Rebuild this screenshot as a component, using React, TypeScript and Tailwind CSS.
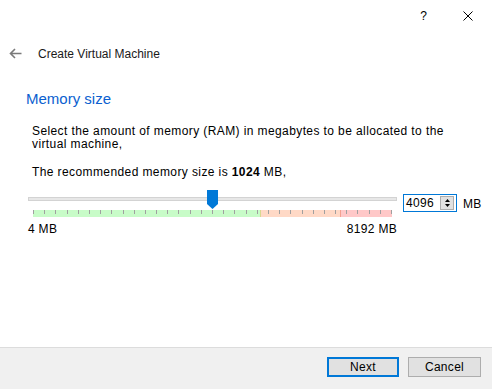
import React from 'react';

const TICKS = Array.from({ length: 33 }, (_, i) => i);

const MemorySlider: React.FC<{ value: number; max: number }> = ({ value, max }) => {
  const pct = (value / max) * 100;
  return (
    <div className="relative w-[369px]">
      {/* track */}
      <div className="h-[19px] relative">
        <div className="absolute left-0 right-0 top-[7px] h-[4px] bg-[#e7e7e7] border border-[#d3d3d3]" />
        <div className="absolute top-0 left-[5px] right-[5px]">
          <svg
            width="11"
            height="19"
            viewBox="0 0 11 19"
            className="absolute top-0 -ml-[5.5px]"
            style={{ left: `${pct}%` }}
          >
            <polygon points="0,0 11,0 11,14 5.5,19 0,14" fill="#0078d7" />
          </svg>
        </div>
      </div>
      {/* colored band with ticks */}
      <div className="ml-[5px] mr-[5px] mt-[1px] h-[7px] flex relative">
        <div className="w-[227px] bg-[#c8fcc8]" />
        <div className="w-px bg-[#d8d890]" />
        <div className="w-[79px] bg-[#ffd9c6]" />
        <div className="w-px bg-[#f4a090]" />
        <div className="flex-1 bg-[#ffc8c8]" />
        <div className="absolute inset-0 flex justify-between">
          {TICKS.map(i => (
            <div key={i} className="w-px h-[4px] bg-[#a0a0a0]" />
          ))}
        </div>
      </div>
      <div className="flex justify-between mt-[5px] text-[12px] leading-[14px] tracking-[0.3px] text-black">
        <span>4 MB</span>
        <span>8192 MB</span>
      </div>
    </div>
  );
};

const App: React.FC = () => {
  return (
    <div
      className="w-[492px] h-[389px] bg-white flex flex-col text-black"
      style={{ fontFamily: '"Liberation Sans", Arial, sans-serif' }}
    >
      {/* title bar */}
      <div className="h-[30px] flex items-center justify-end">
        <span className="text-[12px] mr-[36px] mt-[1px]">?</span>
        <svg width="10" height="10" viewBox="0 0 10 10" className="mr-[19px] mt-[2px]">
          <path d="M0.5 0.5 L9.5 9.5 M9.5 0.5 L0.5 9.5" stroke="#000" strokeWidth="1" />
        </svg>
      </div>

      {/* header */}
      <div className="h-[48px] flex items-center">
        <svg width="13" height="11" viewBox="0 0 13 11" className="ml-[9px] mb-[1px]">
          <path d="M12.5 5.5 H1.5 M6 1 L1.5 5.5 L6 10" stroke="#7a7a7a" strokeWidth="1.6" fill="none" />
        </svg>
        <span className="ml-[16px] text-[12px] text-[#1a1a1a]">Create Virtual Machine</span>
      </div>

      {/* section title */}
      <div className="pl-[26px] mt-[12px] text-[15px] leading-[18px] text-[#0b5fd0]">Memory size</div>

      {/* body */}
      <div className="pl-[32px] w-[460px] mt-[17px] text-[12px] leading-[13px] tracking-[0.4px]">
        <p>Select the amount of memory (RAM) in megabytes to be allocated to the virtual machine,</p>
        <p className="mt-[15px]">
          The recommended memory size is <b>1024</b> MB,
        </p>
      </div>

      <div className="flex pl-[28px] mt-[11px]">
        <MemorySlider value={4096} max={8192} />
        <div className="ml-[6px] mt-[4px] w-[54px] h-[18px] border border-[#0078d7] flex items-center">
          <span className="text-[12px] tracking-[0.3px] ml-[2px] flex-1">4096</span>
          <div className="w-[14px] h-[14px] mr-[2px] bg-[#e1e1e1] border border-[#adadad] flex flex-col items-center justify-center gap-[2px]">
            <svg width="5" height="3" viewBox="0 0 5 3"><polygon points="0,3 5,3 2.5,0" fill="#000" /></svg>
            <svg width="5" height="3" viewBox="0 0 5 3"><polygon points="0,0 5,0 2.5,3" fill="#000" /></svg>
          </div>
        </div>
        <span className="ml-[6px] mt-[5px] text-[12px] tracking-[0.3px]">MB</span>
      </div>

      <div className="flex-1" />

      {/* footer */}
      <div className="h-[42px] border-t border-[#dcdcdc] bg-[#f0f0f0] flex items-start justify-end pt-[9px] pr-[11px] gap-[9px]">
        <button className="w-[72px] h-[20px] bg-[#e1e1e1] border-2 border-[#0078d7] text-[12px] leading-none tracking-[0.3px]">
          Next
        </button>
        <button className="w-[73px] h-[20px] bg-[#e1e1e1] border border-[#adadad] text-[12px] leading-none tracking-[0.3px]">
          Cancel
        </button>
      </div>
    </div>
  );
};

export default App;
